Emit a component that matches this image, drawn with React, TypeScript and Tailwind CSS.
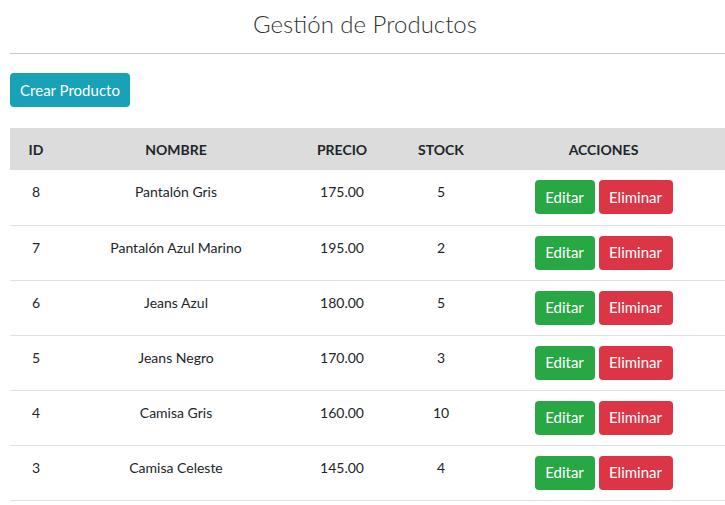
import React from 'react';

interface Producto {
  id: number;
  nombre: string;
  precio: string;
  stock: number;
}

const productos: Producto[] = [
  { id: 8, nombre: 'Pantalón Gris', precio: '175.00', stock: 5 },
  { id: 7, nombre: 'Pantalón Azul Marino', precio: '195.00', stock: 2 },
  { id: 6, nombre: 'Jeans Azul', precio: '180.00', stock: 5 },
  { id: 5, nombre: 'Jeans Negro', precio: '170.00', stock: 3 },
  { id: 4, nombre: 'Camisa Gris', precio: '160.00', stock: 10 },
  { id: 3, nombre: 'Camisa Celeste', precio: '145.00', stock: 4 },
];

export default function App() {
  return (
    <div className="min-h-screen bg-white pl-[10px] text-[#212529] font-['Segoe_UI','Lato','Open_Sans',sans-serif]">
      <h1 className="pr-[5px] pt-[8px] text-center text-[24px] font-light leading-[32px] text-[#333]">
        Gestión de Productos
      </h1>
      <hr className="mt-[13px] border-t border-[#cccccc]" />

      <button className="mt-[19px] h-[34px] w-[120px] rounded-[4px] bg-[#17a2b8] text-[15px] text-white">
        Crear Producto
      </button>

      <table className="mt-[21px] w-[715px] table-fixed border-collapse text-[14px]">
        <colgroup>
          <col className="w-[52px]" />
          <col className="w-[228px]" />
          <col className="w-[104px]" />
          <col className="w-[94px]" />
          <col className="w-[237px]" />
        </colgroup>
        <thead>
          <tr className="h-[42px] bg-[#dcdcdc] text-[14px] font-bold uppercase">
            <th className="text-center">ID</th>
            <th className="text-center">Nombre</th>
            <th className="text-center">Precio</th>
            <th className="text-center">Stock</th>
            <th className="pr-[6px] text-center">Acciones</th>
          </tr>
        </thead>
        <tbody>
          {productos.map((p) => (
            <tr key={p.id} className="h-[55px] border-b border-[#dee2e6]">
              <td className="pt-[11px] text-center align-top leading-[21px]">{p.id}</td>
              <td className="pt-[11px] text-center align-top leading-[21px]">{p.nombre}</td>
              <td className="pt-[11px] text-center align-top leading-[21px]">{p.precio}</td>
              <td className="pt-[11px] text-center align-top leading-[21px]">{p.stock}</td>
              <td className="pr-[6px] pt-[10px] align-top">
                <div className="flex justify-center gap-[4px]">
                  <button className="h-[34px] w-[60px] rounded-[4px] bg-[#28a745] text-[15px] text-white">
                    Editar
                  </button>
                  <button className="h-[34px] w-[74px] rounded-[4px] bg-[#dc3545] text-[15px] text-white">
                    Eliminar
                  </button>
                </div>
              </td>
            </tr>
          ))}
        </tbody>
      </table>
    </div>
  );
}
